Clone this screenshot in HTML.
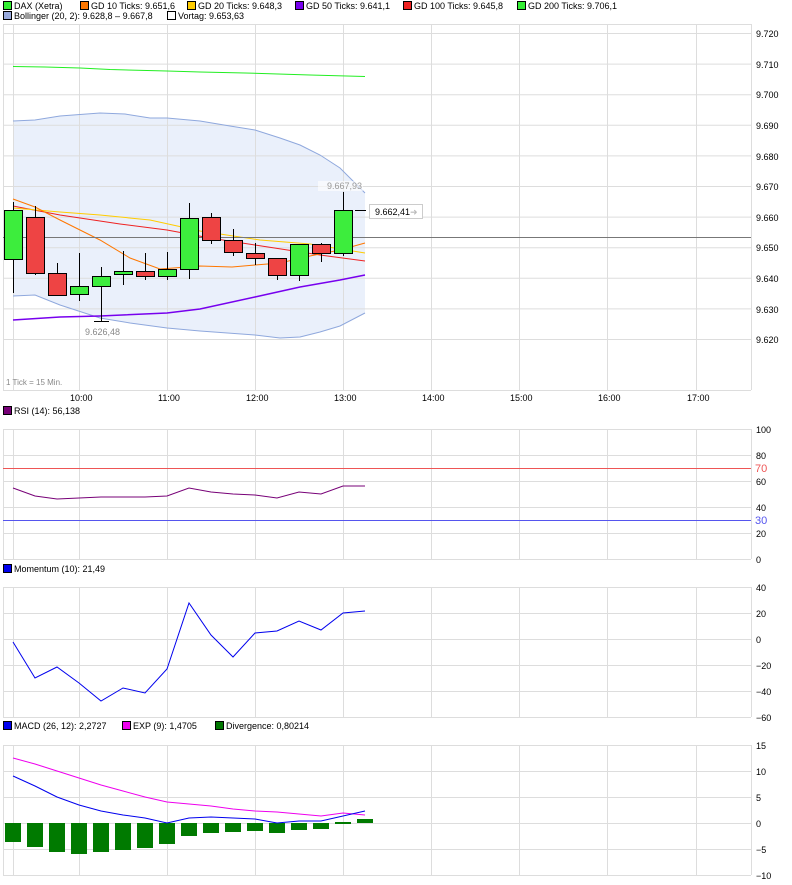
<!DOCTYPE html>
<html><head><meta charset="utf-8"><style>
body{margin:0;background:#fff;width:792px;height:885px;overflow:hidden}
svg{display:block;font-family:"Liberation Sans",sans-serif;font-size:9px}
</style></head><body>
<svg width="792" height="885" xmlns="http://www.w3.org/2000/svg">
<g fill="#000">
<!-- legend -->
<rect x="3.5" y="1.5" width="8" height="8" fill="#33ee33" stroke="#000"/><text x="14" y="9">DAX (Xetra)</text>
<rect x="80.5" y="1.5" width="8" height="8" fill="#ff7700" stroke="#000"/><text x="91" y="9">GD 10 Ticks: 9.651,6</text>
<rect x="187.5" y="1.5" width="8" height="8" fill="#ffcc00" stroke="#000"/><text x="198" y="9">GD 20 Ticks: 9.648,3</text>
<rect x="295.5" y="1.5" width="8" height="8" fill="#7700ee" stroke="#000"/><text x="306" y="9">GD 50 Ticks: 9.641,1</text>
<rect x="403.5" y="1.5" width="8" height="8" fill="#ee2222" stroke="#000"/><text x="414" y="9">GD 100 Ticks: 9.645,8</text>
<rect x="517.5" y="1.5" width="8" height="8" fill="#33ee33" stroke="#000"/><text x="528" y="9">GD 200 Ticks: 9.706,1</text>
<rect x="3.5" y="11.5" width="8" height="8" fill="#99aadd" stroke="#000"/><text x="14" y="19">Bollinger (20, 2): 9.628,8 – 9.667,8</text>
<rect x="167.5" y="11.5" width="8" height="8" fill="#fff" stroke="#000"/><text x="178" y="19">Vortag: 9.653,63</text>
</g>
<!-- main panel -->
<polygon fill="#eaf0fb" points="13,121 35,120 60,116 100,113 125,114 150,118 167,118 200,121 230,126 255,130 280,138 300,145 320,155 340,168 365,193 365,313 340,326 320,332 300,337 280,338 255,335 200,331 167,328 130,323 100,318 60,305 35,295 13,296"/>
<g stroke="#dddddd" stroke-width="1" fill="none">
<path d="M3,24.5H751M3,33.5H751M3,64.1H751M3,94.7H751M3,125.3H751M3,155.9H751M3,186.5H751M3,217.1H751M3,247.7H751M3,278.3H751M3,308.9H751M3,339.5H751M3,390.5H751"/>
<path d="M3.5,24V390M751.5,24V390M13.5,24V390M79.5,24V390M167.5,24V390M255.5,24V390M343.5,24V390M431.5,24V390M519.5,24V390M607.5,24V390M696.5,24V390"/>
<path d="M3,429.5H751M3,455.5H751M3,481.5H751M3,507.5H751M3,533.5H751M3,559.5H751M3.5,429V559M751.5,429V559M13.5,429V559M79.5,429V559M167.5,429V559M255.5,429V559M343.5,429V559M431.5,429V559M519.5,429V559M607.5,429V559M696.5,429V559"/>
<path d="M3,587.5H751M3,613.5H751M3,639.5H751M3,665.5H751M3,691.5H751M3,717.5H751M3.5,587V717M751.5,587V717M13.5,587V717M79.5,587V717M167.5,587V717M255.5,587V717M343.5,587V717M431.5,587V717M519.5,587V717M607.5,587V717M696.5,587V717"/>
<path d="M3,745.5H751M3,771.5H751M3,797.5H751M3,823.5H751M3,849.5H751M3,875.5H751M3.5,745V875M751.5,745V875M13.5,745V875M79.5,745V875M167.5,745V875M255.5,745V875M343.5,745V875M431.5,745V875M519.5,745V875M607.5,745V875M696.5,745V875"/>
</g>
<g fill="none" stroke-width="1">
<polyline stroke="#8fa8dd" points="13,121 35,120 60,116 100,113 125,114 150,118 167,118 200,121 230,126 255,130 280,138 300,145 320,155 340,168 365,193"/>
<polyline stroke="#8fa8dd" points="13,296 35,295 60,305 100,318 130,323 167,328 200,331 255,335 280,338 300,337 320,332 340,326 365,313"/>
<polyline stroke="#22ee22" points="13,66.5 45,67 80,68 110,69.5 167,71 200,72 245,73 310,75 365,76.5"/>
<polyline stroke="#7700ee" stroke-width="1.5" points="13,320 60,317 100,316 167,313 200,309 255,297 300,287 340,280 365,275"/>
<polyline stroke="#ee2222" points="13,206 60,215 120,224 167,230 210,238 255,245 320,255 365,261"/>
<polyline stroke="#ffcc00" points="13,208 60,212 100,215 150,220 200,231 260,240 310,244 365,253"/>
<polyline stroke="#ff7700" points="13,199 35,207 60,220 100,240 130,258 160,269 200,266 232,267 255,265 280,263 310,256 340,250 365,243"/>
<path stroke="#777" d="M3,237.5H751"/>
</g>
<g stroke="#000" stroke-width="1">
<path d="M13.5,202V293M35.5,206V275M57.5,263V295M79.5,253V301M101.5,267V321M123.5,251V285M145.5,253V280M167.5,252V280M189.5,203V279M211.5,213V244M233.5,229V256M255.5,243V265M277.5,258V280M299.5,244V281M321.5,243V262M343.5,192V256M355,210.5H366M94,321.5H109"/>
</g>
<g stroke="#000" stroke-width="1">
<rect x="4.5" y="210.5" width="18" height="49" fill="#3ded3d"/>
<rect x="26.5" y="217.5" width="18" height="56" fill="#ee4444"/>
<rect x="48.5" y="273.5" width="18" height="22" fill="#ee4444"/>
<rect x="70.5" y="286.5" width="18" height="8" fill="#3ded3d"/>
<rect x="92.5" y="276.5" width="18" height="10" fill="#3ded3d"/>
<rect x="114.5" y="271.5" width="18" height="3" fill="#3ded3d"/>
<rect x="136.5" y="271.5" width="18" height="5" fill="#ee4444"/>
<rect x="158.5" y="269.5" width="18" height="7" fill="#3ded3d"/>
<rect x="180.5" y="218.5" width="18" height="51" fill="#3ded3d"/>
<rect x="202.5" y="217.5" width="18" height="23" fill="#ee4444"/>
<rect x="224.5" y="240.5" width="18" height="12" fill="#ee4444"/>
<rect x="246.5" y="253.5" width="18" height="5" fill="#ee4444"/>
<rect x="268.5" y="258.5" width="18" height="17" fill="#ee4444"/>
<rect x="290.5" y="244.5" width="18" height="31" fill="#3ded3d"/>
<rect x="312.5" y="244.5" width="18" height="9" fill="#ee4444"/>
<rect x="334.5" y="210.5" width="18" height="43" fill="#3ded3d"/>
</g>
<rect x="318" y="181" width="45" height="10" fill="#fff" opacity=".6"/>
<text x="327" y="189" fill="#999">9.667,93</text>
<text x="85" y="335" fill="#888">9.626,48</text>
<rect x="369.5" y="204.5" width="53" height="14" fill="#fff" stroke="#ccc"/>
<text x="375" y="215" fill="#000">9.662,41</text>
<text x="410" y="215" fill="#bbb">➜</text>
<g fill="#000">
<text x="756" y="37">9.720</text><text x="756" y="68">9.710</text><text x="756" y="98">9.700</text><text x="756" y="129">9.690</text><text x="756" y="160">9.680</text><text x="756" y="190">9.670</text><text x="756" y="221">9.660</text><text x="756" y="251">9.650</text><text x="756" y="282">9.640</text><text x="756" y="313">9.630</text><text x="756" y="343">9.620</text>
<text x="70" y="401">10:00</text><text x="158" y="401">11:00</text><text x="246" y="401">12:00</text><text x="334" y="401">13:00</text><text x="422" y="401">14:00</text><text x="510" y="401">15:00</text><text x="598" y="401">16:00</text><text x="687" y="401">17:00</text>
<text x="6" y="385" fill="#888" font-size="8">1 Tick = 15 Min.</text>
</g>
<!-- RSI -->
<rect x="3.5" y="406.5" width="8" height="8" fill="#770077" stroke="#000"/><text x="14" y="414">RSI (14): 56,138</text>
<path d="M3,468.5H751" stroke="#ee5555"/><path d="M3,520.5H751" stroke="#5555ee"/>
<polyline fill="none" stroke="#770077" points="13,488 35,496 57,499 79,498 101,497 123,497 145,497 167,496 189,488 211,492 233,494 255,495 277,498 299,492 321,494 343,486 365,486"/>
<g><text x="756" y="433">100</text><text x="756" y="459">80</text><text x="755" y="472" fill="#ee5555" font-size="11">70</text><text x="756" y="485">60</text><text x="756" y="511">40</text><text x="755" y="524" fill="#5555ee" font-size="11">30</text><text x="756" y="537">20</text><text x="756" y="563">0</text></g>
<!-- Momentum -->
<rect x="3.5" y="564.5" width="8" height="8" fill="#0000ee" stroke="#000"/><text x="14" y="572">Momentum (10): 21,49</text>
<polyline fill="none" stroke="#0000ee" points="13,642 35,678 57,667 79,683 101,701 123,688 145,693 167,669 189,603 211,635 233,657 255,633 277,631 299,621 321,630 343,613 365,611"/>
<g><text x="756" y="591">40</text><text x="756" y="617">20</text><text x="756" y="643">0</text><text x="756" y="669">−20</text><text x="756" y="695">−40</text><text x="756" y="721">−60</text></g>
<!-- MACD -->
<rect x="3.5" y="721.5" width="8" height="8" fill="#0000ee" stroke="#000"/><text x="14" y="729">MACD (26, 12): 2,2727</text>
<rect x="122.5" y="721.5" width="8" height="8" fill="#ee00ee" stroke="#000"/><text x="133" y="729">EXP (9): 1,4705</text>
<rect x="215.5" y="721.5" width="8" height="8" fill="#007700" stroke="#000"/><text x="226" y="729">Divergence: 0,80214</text>
<g fill="#007a00">
<rect x="5" y="823" width="16" height="19"/><rect x="27" y="823" width="16" height="24"/><rect x="49" y="823" width="16" height="29"/><rect x="71" y="823" width="16" height="31"/><rect x="93" y="823" width="16" height="29"/><rect x="115" y="823" width="16" height="27"/><rect x="137" y="823" width="16" height="25"/><rect x="159" y="823" width="16" height="21"/><rect x="181" y="823" width="16" height="13"/><rect x="203" y="823" width="16" height="10"/><rect x="225" y="823" width="16" height="9"/><rect x="247" y="823" width="16" height="8"/><rect x="269" y="823" width="16" height="10"/><rect x="291" y="823" width="16" height="7"/><rect x="313" y="823" width="16" height="6"/><rect x="335" y="822" width="16" height="2"/><rect x="357" y="819" width="16" height="4"/>
</g>
<polyline fill="none" stroke="#ee00ee" points="13,758 35,764 57,771 79,778 101,785 123,791 145,797 167,802 189,804 211,806 233,809 255,811 277,812 299,814 321,816 343,813 365,815"/>
<polyline fill="none" stroke="#0000ee" points="13,776 35,786 57,797 79,805 101,811 123,815 145,818 167,823 189,818 211,817 233,818 255,819 277,823 299,821 321,821 343,816 365,811"/>
<g><text x="756" y="749">15</text><text x="756" y="775">10</text><text x="756" y="801">5</text><text x="756" y="827">0</text><text x="756" y="853">−5</text><text x="756" y="879">−10</text></g>
</svg>
</body></html>
